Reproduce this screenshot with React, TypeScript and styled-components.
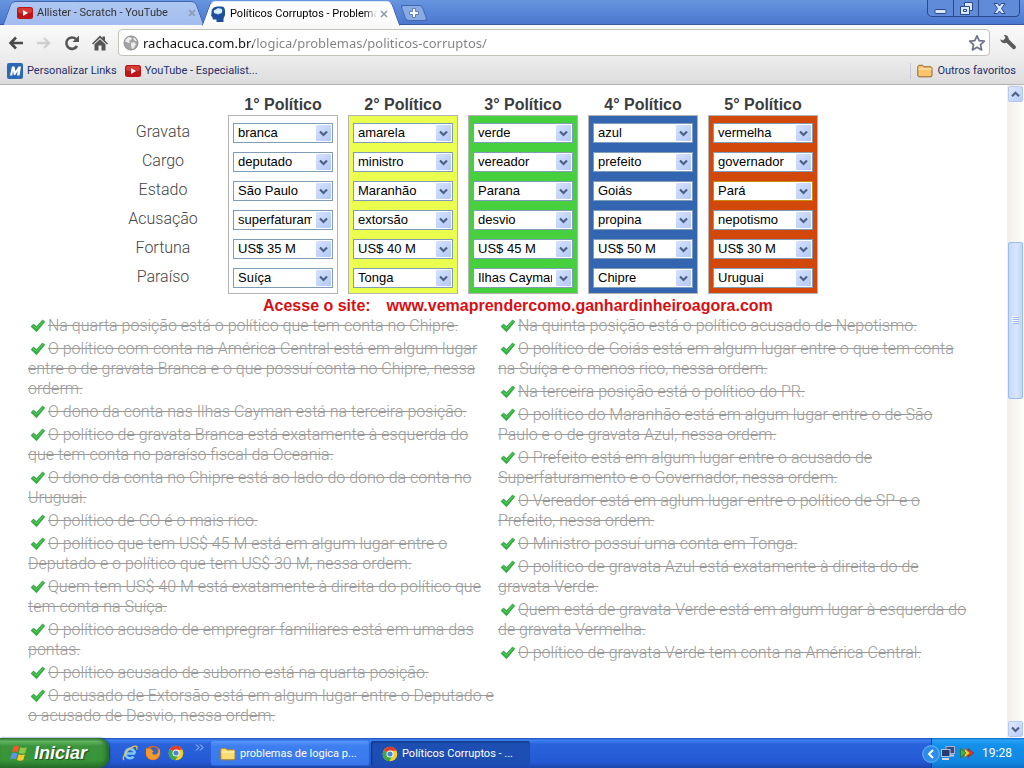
import React, { useState } from "react";
import styled, { createGlobalStyle } from "styled-components";

const ui = `Roboto, "Noto Sans", sans-serif`;
const arial = `"Liberation Sans", Arial, sans-serif`;
const light = `Roboto, "Liberation Sans", sans-serif`;

const GlobalStyle = createGlobalStyle`
  * { box-sizing: border-box; }
  body { margin: 0; background: #fff; font-family: ${arial}; }
  button { font: inherit; color: inherit; border: 0; padding: 0; background: none; cursor: pointer; }
  svg { display: block; flex: none; }
`;

const Desktop = styled.div`
  min-height: 100vh;
  display: flex;
  flex-direction: column;
`;

/* ---------- browser frame ---------- */

const TabStrip = styled.header`
  display: flex;
  align-items: flex-start;
  height: 25px;
  padding-left: 2px;
  background: linear-gradient(#6795df, #4b78cf);
  border-bottom: 1px solid #37599b;
  font: 11px/16px ${ui};
`;

const Tab = styled.div<{ $active?: boolean }>`
  position: relative;
  z-index: ${(p) => (p.$active ? 2 : 1)};
  display: flex;
  align-items: center;
  width: ${(p) => (p.$active ? 200 : 203)}px;
  height: ${(p) => (p.$active ? 25 : 24)}px;
  margin-top: 1px;
  margin-right: ${(p) => (p.$active ? 0 : -4)}px;
  padding: 0 ${(p) => (p.$active ? 10 : 6)}px 0 ${(p) => (p.$active ? 9 : 15)}px;
  color: ${(p) => (p.$active ? "#000" : "#333")};

  &::before,
  &::after {
    content: "";
    position: absolute;
    z-index: -1;
    top: 0;
    bottom: 0;
    background: ${(p) => (p.$active ? "linear-gradient(#ffffff, #fafafa)" : "linear-gradient(#aec6f2, #a2bdee)")};
    border-top: 1px solid ${(p) => (p.$active ? "#dfe8f8" : "#4267ab")};
  }
  &::before {
    left: 5px;
    right: 40%;
    border-left: 1px solid #4267ab;
    border-top-left-radius: 5px;
    transform: skewX(-20deg);
  }
  &::after {
    left: 40%;
    right: 5px;
    border-right: 1px solid #4267ab;
    border-top-right-radius: 5px;
    transform: skewX(20deg);
  }
`;

const TabTitle = styled.button`
  display: flex;
  align-items: center;
  gap: 4px;
  flex: 1;
  min-width: 0;
  text-align: left;
`;

const TabLabel = styled.span`
  flex: 1;
  overflow: hidden;
  white-space: nowrap;
  mask-image: linear-gradient(to right, #000 92%, transparent);
`;

const CloseTab = styled.button`
  width: 14px;
  height: 16px;
  display: grid;
  place-items: center;
  color: #8b97ad;
`;

const NewTab = styled.button`
  position: relative;
  z-index: 1;
  width: 22px;
  height: 16px;
  margin: 5px 0 0 2px;
  display: grid;
  place-items: center;

  &::before {
    content: "";
    position: absolute;
    inset: 0;
    z-index: -1;
    background: #8aaae6;
    border: 1px solid #4267ab;
    border-radius: 3px;
    transform: skewX(20deg);
  }
`;

const WindowButtons = styled.div`
  display: flex;
  height: 17px;
  margin: 0 4px 0 auto;
  border: 1px solid #284a8c;
  border-top: 0;
  border-radius: 0 0 5px 5px;
  background: #5f8bd9;
`;

const WindowButton = styled.button<{ $wide?: boolean }>`
  width: ${(p) => (p.$wide ? 41 : 25)}px;
  display: grid;
  place-items: center;
  & + & { border-left: 1px solid #284a8c; }
`;

const Toolbar = styled.nav`
  display: flex;
  align-items: center;
  gap: 8px;
  height: 34px;
  padding: 1px 6px 0;
  background: linear-gradient(#fafafa, #ececec);
`;

const NavButtons = styled.div`
  display: flex;
  gap: 8px;
`;

const IconButton = styled.button`
  width: 20px;
  height: 20px;
  display: grid;
  place-items: center;
`;

const AddressBar = styled.form`
  flex: 1;
  display: flex;
  align-items: center;
  gap: 4px;
  height: 27px;
  padding: 0 2px 0 4px;
  background: #fff;
  border: 1px solid #c2c2b8;
  border-radius: 4px;
`;

const AddressInput = styled.input`
  flex: 1;
  min-width: 0;
  padding: 0;
  border: 0;
  outline: 0;
  font: 13px/20px "Noto Sans", sans-serif;
  color: transparent;
  background: linear-gradient(to right, #111 110px, #808080 110px);
  background-clip: text;
  -webkit-background-clip: text;
`;

const Bookmarks = styled.nav`
  display: flex;
  align-items: center;
  gap: 8px;
  height: 26px;
  padding: 0 8px 2px 7px;
  background: linear-gradient(#ececec, #dcdcdc);
  border-bottom: 1px solid #b4b4b4;
  font: 11px/16px ${ui};
`;

const Bookmark = styled.a<{ $end?: boolean }>`
  display: flex;
  align-items: center;
  gap: 4px;
  color: #1d2f6b;
  text-decoration: none;
  white-space: nowrap;
  ${(p) => p.$end && "margin-left: auto; border-left: 1px solid #c8ccd2; padding-left: 6px;"}
`;

/* ---------- page ---------- */

const Viewport = styled.div`
  flex: 1;
  display: flex;
`;

const Page = styled.main`
  flex: 1;
  min-width: 0;
  padding: 9px 28px 8px;
  color: #444;
  font-size: 16px;
  line-height: 20px;
`;

const Puzzle = styled.table`
  margin-left: 70px;
  border-collapse: separate;
  border-spacing: 10px 0;
  table-layout: fixed;
  width: 730px;
`;

const HeadCell = styled.th`
  width: 110px;
  height: 21px;
  padding: 1px 0 0;
  line-height: 20px;
  color: #3c3c3c;
  vertical-align: top;
`;

const RowLabel = styled.th`
  padding: 0 0 6px;
  font-family: ${light};
  font-weight: 300;
  text-align: center;
  vertical-align: bottom;

  tr:last-child > & {
    padding-bottom: 7px;
  }
`;

const Cell = styled.td<{ $color: string }>`
  height: 29px;
  padding: 0 4px 5px;
  vertical-align: bottom;
  background: ${(p) => p.$color};
  border: solid #b4b4b4;
  border-width: 0 1px;

  tr:first-child > & {
    height: 33px;
    border-top-width: 1px;
  }
  tr:last-child > & {
    height: 30px;
    border-bottom-width: 1px;
  }
`;

const SelectBox = styled.div`
  position: relative;
  height: 20px;
`;

const Select = styled.select<{ $current: boolean }>`
  appearance: none;
  display: block;
  width: 100%;
  height: 20px;
  padding: 0 20px 0 4px;
  border: 1px solid ${(p) => (p.$current ? "#c98a10" : "#7f9db9")};
  border-radius: 0;
  background: #fff;
  color: #000;
  font: 13px/18px ${arial};
`;

const SelectArrow = styled.span`
  position: absolute;
  top: 2px;
  right: 2px;
  width: 15px;
  height: 16px;
  display: grid;
  place-items: center;
  border-radius: 1px;
  background: linear-gradient(135deg, #d6e2fd, #b2c8f8);
  pointer-events: none;
`;

const Banner = styled.p`
  display: flex;
  gap: 16px;
  margin: 0;
  padding: 2px 0 0 235px;
  color: #d90f14;
  font-weight: 700;
  white-space: nowrap;
`;

const Columns = styled.div`
  display: grid;
  grid-template-columns: 470px 470px;
`;

const Clues = styled.ul`
  margin: 0;
  padding: 0;
  list-style: none;
  font-family: ${light};
  font-weight: 300;
`;

const Clue = styled.li`
  margin-bottom: 3px;
  color: #999;
  text-decoration: line-through;
  white-space: nowrap;

  svg {
    display: inline-block;
    margin: 0 2px 0 2px;
    vertical-align: -3px;
  }
`;

/* ---------- scrollbar ---------- */

const Scrollbar = styled.div`
  display: flex;
  flex-direction: column;
  width: 17px;
  padding: 1px;
  background: linear-gradient(to right, #f0efe9, #fdfdfb);
`;

const ScrollButton = styled.button`
  width: 15px;
  height: 16px;
  display: grid;
  place-items: center;
  border: 1px solid #b4c8f0;
  border-radius: 2px;
  background: linear-gradient(135deg, #dfe8fe, #b8ccf9);
`;

const ScrollTrack = styled.div`
  flex: 1;
  display: flex;
  flex-direction: column;
`;

const ScrollSpace = styled.div<{ $grow: number }>`
  flex: ${(p) => p.$grow};
`;

const ScrollThumb = styled.div`
  flex: 156;
  display: grid;
  place-items: center;
  border: 1px solid #9dbdec;
  border-radius: 2px;
  background: linear-gradient(to right, #c6dafb, #d8e6ff 60%, #c0d5fa);
`;

/* ---------- taskbar ---------- */

const Taskbar = styled.footer`
  display: flex;
  height: 30px;
  background: linear-gradient(#1f4fb8 0, #3d82f0 2px, #2a63dc 6px, #2459d4 24px, #1b45a9);
  color: #fff;
  font: 11px/16px ${ui};
`;

const StartButton = styled.button`
  display: flex;
  align-items: center;
  gap: 5px;
  width: 109px;
  padding: 0 0 1px 10px;
  border-radius: 0 10px 10px 0;
  background: linear-gradient(#2f7a30 0, #69b865 3px, #3c943c 8px, #379537 22px, #28702a);
  box-shadow: inset -3px 0 4px #23682a, 1px 0 2px #153b8f;
  font: italic 700 18px/24px ${arial};
  text-shadow: 1px 1px 1px #1c4a1c;
`;

const QuickLaunch = styled.div`
  display: flex;
  align-items: center;
  gap: 7px;
  width: 102px;
  padding-left: 13px;
`;

const QuickButton = styled.button`
  width: 16px;
  height: 16px;
`;

const MoreButton = styled.button`
  align-self: flex-start;
  margin: 6px 0 0 4px;
`;

const Task = styled.button<{ $active?: boolean }>`
  display: flex;
  align-items: center;
  gap: 4px;
  width: 159px;
  height: 25px;
  margin: 3px 1px 0 0;
  padding: 0 9px 0 ${(p) => (p.$active ? 11 : 9)}px;
  border-radius: 3px;
  background: ${(p) => (p.$active ? "#1d4fb2" : "linear-gradient(#5b96f7, #3d7ff0 5px, #3a78ea)")};
  box-shadow: ${(p) => (p.$active ? "inset 1px 1px 2px #10347f" : "inset -1px -1px 1px #2a5fcb")};
  white-space: nowrap;
`;

const Tray = styled.div`
  position: relative;
  display: flex;
  align-items: center;
  gap: 3px;
  margin-left: auto;
  padding: 0 12px 0 8px;
  border-left: 1px solid #0c3f9e;
  background: linear-gradient(#1466c8 0, #2aa2f4 2px, #1390ea 7px, #1187e2 24px, #0f6fc4);
`;

const TrayToggle = styled.button`
  position: absolute;
  left: -10px;
  top: 7px;
`;

const Clock = styled.time`
  margin-left: 4px;
  font-size: 12px;
`;

/* ---------- icons ---------- */

const YouTubeIcon = () => (
  <svg width="16" height="16" viewBox="0 0 16 16">
    <rect x="0" y="2" width="16" height="12" rx="2.5" fill="#bd1418" />
    <rect x="1" y="3" width="14" height="5" rx="2" fill="#d63a36" />
    <path d="M6 5l5 3-5 3z" fill="#fff" />
  </svg>
);

const HeadIcon = () => (
  <svg width="16" height="16" viewBox="0 0 16 16">
    <path d="M1.500 7C1 2.500 4.500.5 8.500.5h3C14 .5 15 2.500 15 5v3.500c0 2-1.500 3-1.500 4.500v3H6.500v-2.500H3.500C2.500 13.500 2.500 12 2.500 11L1 10z" fill="#1d4f9c" />
    <path d="M4 6.500c-1-2 1-3 2-3 1-2 4-1 4-1 2 0 3 2 2 3.500 0 1.500-2 2-3 1.500L8 9 7 7.500C6 8 4 7.500 4 6.500z" fill="#d7f0ff" />
  </svg>
);

const CrossIcon = () => (
  <svg width="8" height="8" viewBox="0 0 8 8">
    <path d="M1 1l6 6M7 1L1 7" stroke="currentColor" strokeWidth="1.5" />
  </svg>
);

const PlusIcon = () => (
  <svg width="10" height="10" viewBox="0 0 10 10">
    <path d="M3.500.5h3v3h3v3h-3v3h-3v-3h-3v-3h3z" fill="#fff" stroke="#5d7fbd" />
  </svg>
);

const MinimizeIcon = () => (
  <svg width="13" height="13" viewBox="0 0 13 13">
    <rect x="1" y="7.500" width="11" height="4" rx="1" fill="#dbe6fa" stroke="#284a8c" />
  </svg>
);

const RestoreIcon = () => (
  <svg width="13" height="13" viewBox="0 0 13 13">
    <path d="M4.500.5h8v8h-3v4h-9v-8h4z" fill="#dbe6fa" stroke="#284a8c" />
    <path d="M4.500 4.500h5v4M3.500 7.500h3v2h-3z" fill="none" stroke="#284a8c" />
  </svg>
);

const WindowCloseIcon = () => (
  <svg width="13" height="13" viewBox="0 0 13 13">
    <path d="M1 1.500h3.500l2 2.500 2-2.500H12L8.500 6.500 12 11.500H8.500L6.500 9l-2 2.500H1l3.500-5z" fill="#dbe6fa" stroke="#284a8c" />
  </svg>
);

const BackIcon = () => (
  <svg width="16" height="16" viewBox="0 0 16 16">
    <path d="M8 2.500L2.500 8 8 13.500M3 8h12" fill="none" stroke="#4a4a4a" strokeWidth="2.600" />
  </svg>
);

const ForwardIcon = () => (
  <svg width="16" height="16" viewBox="0 0 16 16">
    <path d="M8 3l5 5-5 5M13 8H1" fill="none" stroke="#cfcfcf" strokeWidth="2.400" />
  </svg>
);

const ReloadIcon = () => (
  <svg width="16" height="16" viewBox="0 0 16 16">
    <path d="M13 11A5.700 5.700 0 1 1 12 4" fill="none" stroke="#555" strokeWidth="2.600" />
    <path d="M15 .5V7H8.500z" fill="#555" />
  </svg>
);

const HomeIcon = () => (
  <svg width="16" height="16" viewBox="0 0 16 16">
    <path d="M8 .5L10.500 3V1.500h2.500V5.500L16 8.500l-1 1-7-6.500-7 6.500-1-1z" fill="#555" />
    <path d="M8 4.200l5.500 5v6.300h-4V10.500h-3v5h-4V9.200z" fill="#555" />
  </svg>
);

const GlobeIcon = () => (
  <svg width="16" height="16" viewBox="0 0 16 16">
    <circle cx="8" cy="8" r="7" fill="#a3a3a3" stroke="#8d8d8d" />
    <path d="M3 4l3-2 3 1-1 2-2 1 1 2H5L4 7H2zM8 8l3-1 2 2-2 4-2 1-1-3zM10 3l2 0 2 3-2 0z" fill="#ececec" />
  </svg>
);

const StarIcon = () => (
  <svg width="18" height="18" viewBox="0 0 18 18">
    <path d="M9 1.800l2.200 4.800 5.200.6-3.900 3.500 1.100 5.200L9 13.300l-4.600 2.600 1.100-5.200L1.600 7.200l5.200-.6z" fill="#fff" stroke="#6e7488" strokeWidth="1.700" strokeLinejoin="round" />
  </svg>
);

const WrenchIcon = () => (
  <svg width="18" height="18" viewBox="0 0 18 18">
    <path d="M5 1c2.500-.5 5 1.500 4.700 4.300L16.500 12c1.500 1.800-1.200 4.300-2.800 2.800L7.500 8.800C4.500 10 1.500 8 1.200 5.200L4 6.500 6.500 4z" fill="#5a5a5a" />
  </svg>
);

const MBadge = () => (
  <svg width="16" height="16" viewBox="0 0 16 16">
    <rect width="16" height="16" rx="2" fill="#2c69b4" />
    <path d="M3 12.500L5 3.500h2.500L8.500 8l3-4.500H14l-1.500 9H10l.8-4.500-2.600 4H6.800L6 8l-.8 4.500z" fill="#fff" />
  </svg>
);

const FolderIcon = ({ fill = "#fbc56d", line = "#8f6534" }: { fill?: string; line?: string }) => (
  <svg width="16" height="16" viewBox="0 0 16 16">
    <path d="M.8 13V3.500l1-1.200h4l1.200 1.500h7l1 1V13l-1 .8H1.800z" fill={fill} stroke={line} />
    <path d="M1.500 6h13" stroke="#fff1bf" />
  </svg>
);

const ChevronIcon = ({ up }: { up?: boolean }) => (
  <svg width="9" height="7" viewBox="0 0 9 7">
    <path d={up ? "M1 5.200l3.500-3.500L8 5.200" : "M1 1.500L4.500 5 8 1.500"} fill="none" stroke="#4d6185" strokeWidth="2.200" />
  </svg>
);

const GripIcon = () => (
  <svg width="7" height="8" viewBox="0 0 7 8">
    <path d="M0 .5h6M0 2.500h6M0 4.500h6M0 6.500h6" stroke="#fff" />
    <path d="M1 1.500h6M1 3.500h6M1 5.500h6M1 7.500h6" stroke="#9bbcf0" />
  </svg>
);

const CheckIcon = () => (
  <svg width="16" height="16" viewBox="0 0 16 16" aria-hidden="true">
    <path d="M1 8.500L3.500 6 6.500 8.500 12.500 2l2.300 1.700L6.500 13.800z" fill="#2fb13c" stroke="#23913a" strokeWidth=".6" />
    <path d="M3 7.500l3.500 3L13 3.300" fill="none" stroke="#63d268" strokeWidth="1" />
  </svg>
);

const FlagIcon = () => (
  <svg width="19" height="18" viewBox="0 0 19 18">
    <path d="M3.500 2.500C5.500 1.500 7.500 1.500 9.200 2.700L7.700 8.500C6 7.300 4 7.300 2 8.200z" fill="#ee5a2a" />
    <path d="M10.300 3.200c2 1 4 1 6.500 0L15.200 9c-2 1-4.200 1-6.300 0z" fill="#8ccb45" />
    <path d="M1.700 9.500c2-1 4-1 5.700.2L6 15.500c-2-1.200-4-1.200-5.800-.2z" fill="#5b93ee" />
    <path d="M8.600 10.300c2 1 4 1 6.300 0L13.300 16c-2 1-4.200 1-6.300 0z" fill="#fbc92c" />
  </svg>
);

const ExplorerIcon = () => (
  <svg width="16" height="16" viewBox="0 0 16 16">
    <path d="M4 8.500h9M12.800 8.500a4.700 4.700 0 1 0-1.200 3.200" fill="none" stroke="#7cc8f8" strokeWidth="2.600" />
    <path d="M2 15C-1 13 6 3 12.500 1.200 15.500.6 15.500 2.500 14.500 4.500" fill="none" stroke="#f3c544" strokeWidth="1.300" />
  </svg>
);

const FirefoxIcon = () => (
  <svg width="16" height="16" viewBox="0 0 16 16">
    <circle cx="8" cy="8" r="7.300" fill="#e66a14" />
    <circle cx="8.500" cy="6.500" r="4.500" fill="#3b64b4" />
    <path d="M1 3l2 1 3-.5 1 2 2 .5-2 2c1 2 4 2 6 0l1-5c2 3 1 9-3 11-5 2-10-1-10-6z" fill="#f59a26" />
  </svg>
);

const ChromeIcon = () => (
  <svg width="16" height="16" viewBox="0 0 16 16">
    <circle cx="8" cy="8" r="7.300" fill="#f6cf2f" />
    <path d="M8 8L1.700 4.300A7.300 7.300 0 0 1 14.500 4.700H8z" fill="#dd3c2e" />
    <path d="M8 8L1.700 4.300A7.300 7.300 0 0 0 7.500 15.300L10.500 9.500z" fill="#3fa648" />
    <circle cx="8" cy="8" r="3.500" fill="#fff" />
    <circle cx="8" cy="8" r="2.600" fill="#4a86d8" />
  </svg>
);

const MoreIcon = () => (
  <svg width="9" height="7" viewBox="0 0 9 7">
    <path d="M1 .5l3 3-3 3M5 .5l3 3-3 3" fill="none" stroke="#b5cdf8" />
  </svg>
);

const TrayToggleIcon = () => (
  <svg width="18" height="18" viewBox="0 0 18 18">
    <circle cx="9" cy="9" r="8.300" fill="#2b8cec" stroke="#6cb9f8" />
    <path d="M11 5L7 9l4 4" fill="none" stroke="#fff" strokeWidth="2" />
  </svg>
);

const NetworkIcon = () => (
  <svg width="16" height="16" viewBox="0 0 16 16">
    <rect x="6" y="1.500" width="8.500" height="7" fill="#3a4a7c" stroke="#a9b2cc" />
    <path d="M8 10.500h6" stroke="#c8cddc" strokeWidth="2" />
    <rect x="1.500" y="4.500" width="8.500" height="7" fill="#2a3a6e" stroke="#b8c0d6" />
    <path d="M2 14h7" stroke="#d4d8e4" strokeWidth="2" />
  </svg>
);

const ArrowsIcon = () => (
  <svg width="16" height="16" viewBox="0 0 16 16">
    <path d="M9 3.500l5.500 4.500L9 12.500z" fill="#dc3427" stroke="#7d1d18" strokeWidth=".6" />
    <path d="M5.500 3.500L11 8l-5.500 4.500z" fill="#f4cc35" stroke="#8b6c15" strokeWidth=".6" />
    <path d="M1.500 3.500L7 8l-5.500 4.500z" fill="#46b341" stroke="#1d6420" strokeWidth=".6" />
  </svg>
);

/* ---------- data ---------- */

const politicians = [
  { name: "1° Político", color: "#ffffff" },
  { name: "2° Político", color: "#ebff4f" },
  { name: "3° Político", color: "#46d03e" },
  { name: "4° Político", color: "#3465b0" },
  { name: "5° Político", color: "#d2470a" },
];

const attributes = [
  { label: "Gravata", values: ["branca", "amarela", "verde", "azul", "vermelha"] },
  { label: "Cargo", values: ["deputado", "ministro", "vereador", "prefeito", "governador"] },
  { label: "Estado", values: ["São Paulo", "Maranhão", "Parana", "Goiás", "Pará"] },
  { label: "Acusação", values: ["superfaturamento", "extorsão", "desvio", "propina", "nepotismo"] },
  { label: "Fortuna", values: ["US$ 35 M", "US$ 40 M", "US$ 45 M", "US$ 50 M", "US$ 30 M"] },
  { label: "Paraíso", values: ["Suíça", "Tonga", "Ilhas Cayman", "Chipre", "Uruguai"] },
];

const leftClues = [
  ["Na quarta posição está o político que tem conta no Chipre."],
  ["O político com conta na América Central está em algum lugar", "entre o de gravata Branca e o que possuí conta no Chipre, nessa", "orderm."],
  ["O dono da conta nas Ilhas Cayman está na terceira posição."],
  ["O político de gravata Branca está exatamente à esquerda do", "que tem conta no paraíso fiscal da Oceania."],
  ["O dono da conta no Chipre está ao lado do dono da conta no", "Uruguai."],
  ["O político de GO é o mais rico."],
  ["O político que tem US$ 45 M está em algum lugar entre o", "Deputado e o político que tem US$ 30 M, nessa ordem."],
  ["Quem tem US$ 40 M está exatamente à direita do político que", "tem conta na Suíça."],
  ["O político acusado de empregrar familiares está em uma das", "pontas."],
  ["O político acusado de suborno está na quarta posição."],
  ["O acusado de Extorsão está em algum lugar entre o Deputado e", "o acusado de Desvio, nessa ordem."],
];

const rightClues = [
  ["Na quinta posição está o político acusado de Nepotismo."],
  ["O político de Goiás está em algum lugar entre o que tem conta", "na Suíça e o menos rico, nessa ordem."],
  ["Na terceira posição está o político do PR."],
  ["O político do Maranhão está em algum lugar entre o de São", "Paulo e o de gravata Azul, nessa ordem."],
  ["O Prefeito está em algum lugar entre o acusado de", "Superfaturamento e o Governador, nessa ordem."],
  ["O Vereador está em aglum lugar entre o político de SP e o", "Prefeito, nessa ordem."],
  ["O Ministro possuí uma conta em Tonga."],
  ["O político de gravata Azul está exatamente à direita do de", "gravata Verde."],
  ["Quem está de gravata Verde está em algum lugar à esquerda do", "de gravata Vermelha."],
  ["O político de gravata Verde tem conta na América Central."],
];

const ClueList = ({ clues }: { clues: string[][] }) => (
  <Clues>
    {clues.map((lines) => (
      <Clue key={lines[0]}>
        <CheckIcon />
        {lines.map((line, i) => (
          <React.Fragment key={line}>
            {i > 0 && <br />}
            {line}
          </React.Fragment>
        ))}
      </Clue>
    ))}
  </Clues>
);

export default function App() {
  const [url, setUrl] = useState("rachacuca.com.br/logica/problemas/politicos-corruptos/");

  return (
    <Desktop>
      <GlobalStyle />
      <TabStrip>
        <Tab>
          <TabTitle>
            <YouTubeIcon />
            <TabLabel>Allister - Scratch - YouTube</TabLabel>
          </TabTitle>
          <CloseTab aria-label="Fechar guia"><CrossIcon /></CloseTab>
        </Tab>
        <Tab $active>
          <TabTitle>
            <HeadIcon />
            <TabLabel>Políticos Corruptos - Problemas</TabLabel>
          </TabTitle>
          <CloseTab aria-label="Fechar guia"><CrossIcon /></CloseTab>
        </Tab>
        <NewTab aria-label="Nova guia"><PlusIcon /></NewTab>
        <WindowButtons>
          <WindowButton aria-label="Minimizar"><MinimizeIcon /></WindowButton>
          <WindowButton aria-label="Restaurar"><RestoreIcon /></WindowButton>
          <WindowButton $wide aria-label="Fechar"><WindowCloseIcon /></WindowButton>
        </WindowButtons>
      </TabStrip>

      <Toolbar>
        <NavButtons>
          <IconButton aria-label="Voltar"><BackIcon /></IconButton>
          <IconButton aria-label="Avançar"><ForwardIcon /></IconButton>
          <IconButton aria-label="Recarregar"><ReloadIcon /></IconButton>
          <IconButton aria-label="Página inicial"><HomeIcon /></IconButton>
        </NavButtons>
        <AddressBar onSubmit={(e) => e.preventDefault()}>
          <GlobeIcon />
          <AddressInput aria-label="Endereço" value={url} onChange={(e) => setUrl(e.target.value)} />
          <IconButton type="button" aria-label="Favoritar"><StarIcon /></IconButton>
        </AddressBar>
        <IconButton aria-label="Ferramentas"><WrenchIcon /></IconButton>
      </Toolbar>

      <Bookmarks>
        <Bookmark href="#links"><MBadge />Personalizar Links</Bookmark>
        <Bookmark href="#youtube"><YouTubeIcon />YouTube - Especialist...</Bookmark>
        <Bookmark href="#outros" $end><FolderIcon />Outros favoritos</Bookmark>
      </Bookmarks>

      <Viewport>
        <Page>
          <Puzzle>
            <thead>
              <tr>
                <HeadCell as="td" />
                {politicians.map((p) => (
                  <HeadCell key={p.name} scope="col">{p.name}</HeadCell>
                ))}
              </tr>
            </thead>
            <tbody>
              {attributes.map((attr) => (
                <tr key={attr.label}>
                  <RowLabel scope="row">{attr.label}</RowLabel>
                  {politicians.map((p, i) => (
                    <Cell key={p.name} $color={p.color}>
                      <SelectBox>
                        <Select
                          aria-label={`${attr.label}, ${p.name}`}
                          defaultValue={attr.values[i]}
                          $current={attr.values[i] === "Pará"}
                        >
                          {attr.values.map((v) => (
                            <option key={v}>{v}</option>
                          ))}
                        </Select>
                        <SelectArrow><ChevronIcon /></SelectArrow>
                      </SelectBox>
                    </Cell>
                  ))}
                </tr>
              ))}
            </tbody>
          </Puzzle>
          <Banner>
            <span>Acesse o site:</span>
            <span>www.vemaprendercomo.ganhardinheiroagora.com</span>
          </Banner>
          <Columns>
            <ClueList clues={leftClues} />
            <ClueList clues={rightClues} />
          </Columns>
        </Page>
        <Scrollbar>
          <ScrollButton aria-label="Rolar para cima"><ChevronIcon up /></ScrollButton>
          <ScrollTrack>
            <ScrollSpace $grow={140} />
            <ScrollThumb><GripIcon /></ScrollThumb>
            <ScrollSpace $grow={323} />
          </ScrollTrack>
          <ScrollButton aria-label="Rolar para baixo"><ChevronIcon /></ScrollButton>
        </Scrollbar>
      </Viewport>

      <Taskbar>
        <StartButton><FlagIcon />Iniciar</StartButton>
        <QuickLaunch>
          <QuickButton aria-label="Internet Explorer"><ExplorerIcon /></QuickButton>
          <QuickButton aria-label="Firefox"><FirefoxIcon /></QuickButton>
          <QuickButton aria-label="Chrome"><ChromeIcon /></QuickButton>
          <MoreButton aria-label="Mais"><MoreIcon /></MoreButton>
        </QuickLaunch>
        <Task><FolderIcon fill="#f8dd75" line="#a9802a" />problemas de logica p...</Task>
        <Task $active><ChromeIcon />Políticos Corruptos - ...</Task>
        <Tray>
          <TrayToggle aria-label="Mostrar ícones ocultos"><TrayToggleIcon /></TrayToggle>
          <NetworkIcon />
          <ArrowsIcon />
          <Clock>19:28</Clock>
        </Tray>
      </Taskbar>
    </Desktop>
  );
}
